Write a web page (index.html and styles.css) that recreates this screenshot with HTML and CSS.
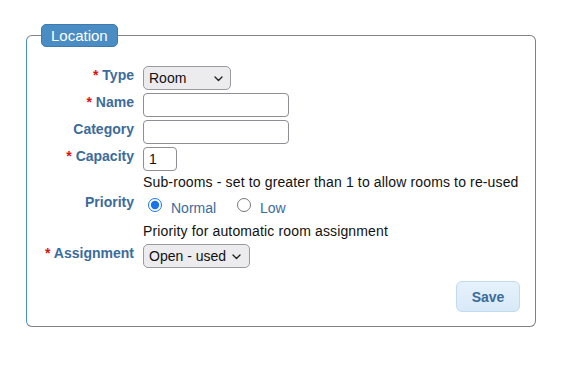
FILE: index.html
```html
<!DOCTYPE html>
<html lang="en">
<head>
    <meta charset="UTF-8">
    <meta name="viewport" content="width=device-width, initial-scale=1.0">
    <title>Location</title>
    <link rel="stylesheet" href="styles.css">
</head>
<body>
    <form class="location-form">
        <fieldset class="location">
            <legend class="location-title">Location</legend>

            <div class="form-row">
                <label class="field-label"><span class="req">*</span> Type</label>
                <div class="field">
                    <span class="select-wrap select-type">
                        <select class="select"><option>Room</option></select>
                        <svg class="chevron" width="9" height="6" viewBox="0 0 9 6"><path d="M1 1l3.5 3.5L8 1" fill="none" stroke="#222" stroke-width="1.4" stroke-linecap="round" stroke-linejoin="round"/></svg>
                    </span>
                </div>
            </div>

            <div class="form-row">
                <label class="field-label"><span class="req">*</span> Name</label>
                <div class="field"><input class="text-input text-wide" type="text"></div>
            </div>

            <div class="form-row">
                <label class="field-label">Category</label>
                <div class="field"><input class="text-input text-wide" type="text"></div>
            </div>

            <div class="form-row">
                <label class="field-label"><span class="req">*</span> Capacity</label>
                <div class="field">
                    <input class="text-input text-small" type="text" value="1">
                    <div class="hint hint-capacity">Sub-rooms - set to greater than 1 to allow rooms to re-used</div>
                </div>
            </div>

            <div class="form-row row-priority">
                <label class="field-label">Priority</label>
                <div class="field">
                    <div class="radio-line">
                        <label class="radio"><input type="radio" name="priority" checked><span>Normal</span></label>
                        <label class="radio"><input type="radio" name="priority"><span>Low</span></label>
                    </div>
                    <div class="hint hint-priority">Priority for automatic room assignment</div>
                </div>
            </div>

            <div class="form-row">
                <label class="field-label"><span class="req">*</span> Assignment</label>
                <div class="field">
                    <span class="select-wrap select-assign">
                        <select class="select"><option>Open - used</option></select>
                        <svg class="chevron" width="9" height="6" viewBox="0 0 9 6"><path d="M1 1l3.5 3.5L8 1" fill="none" stroke="#222" stroke-width="1.4" stroke-linecap="round" stroke-linejoin="round"/></svg>
                    </span>
                </div>
            </div>

            <div class="form-actions">
                <button type="button" class="btn-save">Save</button>
            </div>
        </fieldset>
    </form>
</body>
</html>
```

FILE: styles.css
```css
body {
    margin: 0;
    background: #fff;
    color: #111;
    font-family: 'Liberation Sans', Arial, sans-serif;
    font-size: 14px;
}
.location-form {
    margin: 0;
}
.location {
    box-sizing: border-box;
    width: 510px;
    margin: 24px 0 0 26px;
    padding: 19px 15px 14px 0;
    border: 1px solid #808080;
    border-left-color: #4a90c8;
    border-radius: 6px;
}
.location-title {
    margin-left: 14px;
    padding: 2px 9px;
    background: #4a8cc4;
    border: 1px solid #3c7ab0;
    border-radius: 5px;
    color: #fff;
    font-size: 15px;
    line-height: 17px;
}
.form-row {
    display: grid;
    grid-template-columns: 107px 1fr;
    column-gap: 9px;
    margin-bottom: 3px;
}
.row-priority {
    margin-bottom: 5px;
}
.field-label {
    padding-top: 1px;
    text-align: right;
    color: #3b6b9b;
    font-size: 14px;
    font-weight: bold;
    line-height: 16px;
}
.req {
    color: #e01010;
}
.field {
    min-width: 0;
}
.text-input {
    box-sizing: border-box;
    display: block;
    height: 24px;
    margin: 0;
    padding: 0 5px;
    border: 1px solid #8e8e93;
    border-radius: 4px;
    background: #fff;
    font-family: 'Liberation Sans', Arial, sans-serif;
    font-size: 14px;
    color: #111;
}
.text-wide {
    width: 146px;
}
.text-small {
    width: 34px;
}
.hint {
    line-height: 16px;
    letter-spacing: 0.14px;
}
.hint-capacity {
    margin-top: 3px;
}
.hint-priority {
    margin-top: 5px;
}
.select-wrap {
    position: relative;
    display: inline-block;
    vertical-align: top;
}
.select {
    box-sizing: border-box;
    display: block;
    height: 24px;
    margin: 0;
    padding: 0 20px 0 5px;
    border: 1px solid #9a9a9f;
    border-radius: 5px;
    background: #ececef;
    color: #111;
    font-family: 'Liberation Sans', Arial, sans-serif;
    font-size: 14px;
    appearance: none;
    -webkit-appearance: none;
}
.select-type .select {
    width: 88px;
}
.select-assign .select {
    width: 107px;
}
.chevron {
    position: absolute;
    top: 10px;
    pointer-events: none;
}
.select-type .chevron {
    right: 8px;
}
.select-assign .chevron {
    right: 9px;
}
.radio-line {
    padding-top: 5px;
    line-height: 20px;
    color: #3b6b9b;
}
.radio {
    margin-right: 12px;
}
.radio input {
    width: 14px;
    height: 14px;
    margin: 0 9px 0 5px;
    vertical-align: 1px;
    accent-color: #1a73e8;
}
.form-actions {
    display: flex;
    justify-content: flex-end;
    margin-top: 13px;
}
.btn-save {
    width: 64px;
    height: 31px;
    padding: 0;
    border: 1px solid #c3d9ec;
    border-radius: 6px;
    background: linear-gradient(#e6f2fc, #d8e9f8);
    color: #3b6b9b;
    font-family: 'Liberation Sans', Arial, sans-serif;
    font-size: 14px;
    font-weight: bold;
}
```
